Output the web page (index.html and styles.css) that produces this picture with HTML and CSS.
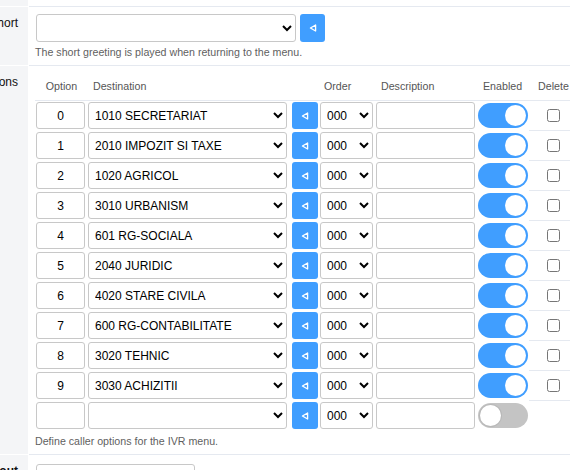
FILE: index.html
```html
<!DOCTYPE html>
<html>
<head>
<meta charset="utf-8">
<link rel="stylesheet" href="styles.css">
</head>
<body>
<div class="form">
  <div class="label top"></div>
  <div class="field top"></div>

  <div class="label"><span>Greeting Short</span></div>
  <div class="field">
    <div class="line">
      <select class="sel sel-greet"><option></option></select>
      <button class="play play-lg"><svg width="8" height="8" viewBox="0 0 8 8"><path d="M6.6 1 L1.4 4 L6.6 7 Z" fill="none" stroke="#fff" stroke-width="1.3" stroke-linejoin="round"/></svg></button>
    </div>
    <div class="desc">The short greeting is played when returning to the menu.</div>
  </div>

  <div class="label"><span>Options</span></div>
  <div class="field">
    <div class="opts">
      <div class="th center">Option</div>
      <div class="th">Destination</div>
      <div class="th"></div>
      <div class="th th-order">Order</div>
      <div class="th">Description</div>
      <div class="th">Enabled</div>
      <div class="th center">Delete</div>

      <div class="c"><input class="in opt" value="0"></div>
      <div class="c"><select class="sel dest"><option>1010 SECRETARIAT</option></select></div>
      <div class="c"><button class="play"><svg width="8" height="8" viewBox="0 0 8 8"><path d="M6.6 1 L1.4 4 L6.6 7 Z" fill="none" stroke="#fff" stroke-width="1.3" stroke-linejoin="round"/></svg></button></div>
      <div class="c"><select class="sel order"><option>000</option></select></div>
      <div class="c"><input class="in descin" value=""></div>
      <div class="c"><span class="toggle on"><span class="knob"></span></span></div>
      <div class="c del"><input type="checkbox"></div>

      <div class="c"><input class="in opt" value="1"></div>
      <div class="c"><select class="sel dest"><option>2010 IMPOZIT SI TAXE</option></select></div>
      <div class="c"><button class="play"><svg width="8" height="8" viewBox="0 0 8 8"><path d="M6.6 1 L1.4 4 L6.6 7 Z" fill="none" stroke="#fff" stroke-width="1.3" stroke-linejoin="round"/></svg></button></div>
      <div class="c"><select class="sel order"><option>000</option></select></div>
      <div class="c"><input class="in descin" value=""></div>
      <div class="c"><span class="toggle on"><span class="knob"></span></span></div>
      <div class="c del"><input type="checkbox"></div>

      <div class="c"><input class="in opt" value="2"></div>
      <div class="c"><select class="sel dest"><option>1020 AGRICOL</option></select></div>
      <div class="c"><button class="play"><svg width="8" height="8" viewBox="0 0 8 8"><path d="M6.6 1 L1.4 4 L6.6 7 Z" fill="none" stroke="#fff" stroke-width="1.3" stroke-linejoin="round"/></svg></button></div>
      <div class="c"><select class="sel order"><option>000</option></select></div>
      <div class="c"><input class="in descin" value=""></div>
      <div class="c"><span class="toggle on"><span class="knob"></span></span></div>
      <div class="c del"><input type="checkbox"></div>

      <div class="c"><input class="in opt" value="3"></div>
      <div class="c"><select class="sel dest"><option>3010 URBANISM</option></select></div>
      <div class="c"><button class="play"><svg width="8" height="8" viewBox="0 0 8 8"><path d="M6.6 1 L1.4 4 L6.6 7 Z" fill="none" stroke="#fff" stroke-width="1.3" stroke-linejoin="round"/></svg></button></div>
      <div class="c"><select class="sel order"><option>000</option></select></div>
      <div class="c"><input class="in descin" value=""></div>
      <div class="c"><span class="toggle on"><span class="knob"></span></span></div>
      <div class="c del"><input type="checkbox"></div>

      <div class="c"><input class="in opt" value="4"></div>
      <div class="c"><select class="sel dest"><option>601 RG-SOCIALA</option></select></div>
      <div class="c"><button class="play"><svg width="8" height="8" viewBox="0 0 8 8"><path d="M6.6 1 L1.4 4 L6.6 7 Z" fill="none" stroke="#fff" stroke-width="1.3" stroke-linejoin="round"/></svg></button></div>
      <div class="c"><select class="sel order"><option>000</option></select></div>
      <div class="c"><input class="in descin" value=""></div>
      <div class="c"><span class="toggle on"><span class="knob"></span></span></div>
      <div class="c del"><input type="checkbox"></div>

      <div class="c"><input class="in opt" value="5"></div>
      <div class="c"><select class="sel dest"><option>2040 JURIDIC</option></select></div>
      <div class="c"><button class="play"><svg width="8" height="8" viewBox="0 0 8 8"><path d="M6.6 1 L1.4 4 L6.6 7 Z" fill="none" stroke="#fff" stroke-width="1.3" stroke-linejoin="round"/></svg></button></div>
      <div class="c"><select class="sel order"><option>000</option></select></div>
      <div class="c"><input class="in descin" value=""></div>
      <div class="c"><span class="toggle on"><span class="knob"></span></span></div>
      <div class="c del"><input type="checkbox"></div>

      <div class="c"><input class="in opt" value="6"></div>
      <div class="c"><select class="sel dest"><option>4020 STARE CIVILA</option></select></div>
      <div class="c"><button class="play"><svg width="8" height="8" viewBox="0 0 8 8"><path d="M6.6 1 L1.4 4 L6.6 7 Z" fill="none" stroke="#fff" stroke-width="1.3" stroke-linejoin="round"/></svg></button></div>
      <div class="c"><select class="sel order"><option>000</option></select></div>
      <div class="c"><input class="in descin" value=""></div>
      <div class="c"><span class="toggle on"><span class="knob"></span></span></div>
      <div class="c del"><input type="checkbox"></div>

      <div class="c"><input class="in opt" value="7"></div>
      <div class="c"><select class="sel dest"><option>600 RG-CONTABILITATE</option></select></div>
      <div class="c"><button class="play"><svg width="8" height="8" viewBox="0 0 8 8"><path d="M6.6 1 L1.4 4 L6.6 7 Z" fill="none" stroke="#fff" stroke-width="1.3" stroke-linejoin="round"/></svg></button></div>
      <div class="c"><select class="sel order"><option>000</option></select></div>
      <div class="c"><input class="in descin" value=""></div>
      <div class="c"><span class="toggle on"><span class="knob"></span></span></div>
      <div class="c del"><input type="checkbox"></div>

      <div class="c"><input class="in opt" value="8"></div>
      <div class="c"><select class="sel dest"><option>3020 TEHNIC</option></select></div>
      <div class="c"><button class="play"><svg width="8" height="8" viewBox="0 0 8 8"><path d="M6.6 1 L1.4 4 L6.6 7 Z" fill="none" stroke="#fff" stroke-width="1.3" stroke-linejoin="round"/></svg></button></div>
      <div class="c"><select class="sel order"><option>000</option></select></div>
      <div class="c"><input class="in descin" value=""></div>
      <div class="c"><span class="toggle on"><span class="knob"></span></span></div>
      <div class="c del"><input type="checkbox"></div>

      <div class="c"><input class="in opt" value="9"></div>
      <div class="c"><select class="sel dest"><option>3030 ACHIZITII</option></select></div>
      <div class="c"><button class="play"><svg width="8" height="8" viewBox="0 0 8 8"><path d="M6.6 1 L1.4 4 L6.6 7 Z" fill="none" stroke="#fff" stroke-width="1.3" stroke-linejoin="round"/></svg></button></div>
      <div class="c"><select class="sel order"><option>000</option></select></div>
      <div class="c"><input class="in descin" value=""></div>
      <div class="c"><span class="toggle on"><span class="knob"></span></span></div>
      <div class="c del"><input type="checkbox"></div>

      <div class="c"><input class="in opt" value=""></div>
      <div class="c"><select class="sel dest"><option></option></select></div>
      <div class="c"><button class="play"><svg width="8" height="8" viewBox="0 0 8 8"><path d="M6.6 1 L1.4 4 L6.6 7 Z" fill="none" stroke="#fff" stroke-width="1.3" stroke-linejoin="round"/></svg></button></div>
      <div class="c"><select class="sel order"><option>000</option></select></div>
      <div class="c"><input class="in descin" value=""></div>
      <div class="c"><span class="toggle off"><span class="knob"></span></span></div>
      <div class="c"></div>
    </div>
    <div class="desc">Define caller options for the IVR menu.</div>
  </div>

  <div class="label req"><span>Timeout</span></div>
  <div class="field"><input class="in timeout" value=""></div>
</div>
</body>
</html>
```

FILE: styles.css
```css
html, body {
  margin: 0;
  padding: 0;
  background: #ffffff;
  overflow: hidden;
  font-family: "Liberation Sans", Arial, sans-serif;
}

.form {
  display: grid;
  grid-template-columns: 28px 1fr;
  column-gap: 1px;
  width: 570px;
}

.label {
  background: #f4f5f7;
  border-bottom: 1px solid #ffffff;
  display: flex;
  justify-content: flex-end;
  align-items: flex-start;
  overflow: hidden;
  padding: 8px 10px 0 0;
  font-size: 12px;
  line-height: 16px;
  color: #111;
}

.label span {
  white-space: nowrap;
  flex-shrink: 0;
}

.label.req {
  font-weight: bold;
}

.field {
  border-bottom: 1px solid #e5e9f0;
  padding: 7px 0 6px 6px;
  min-width: 0;
}

.label.top, .field.top {
  height: 6px;
  padding: 0;
}

.line {
  display: flex;
  gap: 4px;
}

.sel {
  font-family: "Liberation Sans", Arial, sans-serif;
  font-size: 12px;
  color: #000;
  background: #fff;
  border: 1px solid #c8c8c8;
  border-radius: 3px;
  height: 27px;
  padding: 0 1px 0 2px;
  margin: 0;
  box-sizing: border-box;
}

.sel-greet {
  width: 260px;
  height: 28px;
  margin-left: 1px;
}

.play {
  width: 26px;
  height: 27px;
  border: none;
  border-radius: 3px;
  background: #409eff;
  padding: 0;
  margin: 0;
  display: flex;
  align-items: center;
  justify-content: center;
}

.play-lg {
  width: 25px;
  height: 28px;
}

.desc {
  margin-top: 3px;
  font-size: 10.67px;
  line-height: 14px;
  color: #5f5f5f;
}

.opts {
  display: grid;
  grid-template-columns: 53px 204px 28px 56px 102px 51px 49px;
  width: 543px;
}

.th {
  font-size: 10.67px;
  line-height: 14px;
  color: #555;
  padding: 6px 0 7px 5px;
  border-bottom: 1px solid #e5e9f0;
  white-space: nowrap;
}

.th.center {
  text-align: center;
  padding-left: 0;
}

.th.th-order {
  padding-left: 4px;
}

.c {
  padding: 1px 0 2px 0;
  display: flex;
  align-items: center;
}

.c.del {
  justify-content: center;
  border-bottom: 1px solid #e5e9f0;
  padding-bottom: 1px;
}

.in {
  font-family: "Liberation Sans", Arial, sans-serif;
  font-size: 12px;
  color: #000;
  background: #fff;
  border: 1px solid #c8c8c8;
  border-radius: 3px;
  height: 27px;
  padding: 0 5px;
  margin: 0;
  box-sizing: border-box;
}

.opt {
  width: 49px;
  margin-left: 1px;
  text-align: center;
}

.dest {
  width: 199px;
}

.order {
  width: 53px;
}

.descin {
  width: 99px;
}

.toggle {
  width: 50px;
  height: 25px;
  border-radius: 13px;
  box-sizing: border-box;
  padding: 2px;
  display: flex;
}

.toggle.on {
  background: #409eff;
  justify-content: flex-end;
}

.toggle.off {
  background: #c4c4c4;
  justify-content: flex-start;
}

.knob {
  width: 21px;
  height: 21px;
  border-radius: 50%;
  background: #fff;
}

.toggle.off .knob {
  box-shadow: 0 0 0 1px #b8b8b8;
}

.del input {
  width: 13px;
  height: 13px;
  margin: 0;
}

.timeout {
  width: 159px;
  margin: 2px 0 0 1px;
}
```
